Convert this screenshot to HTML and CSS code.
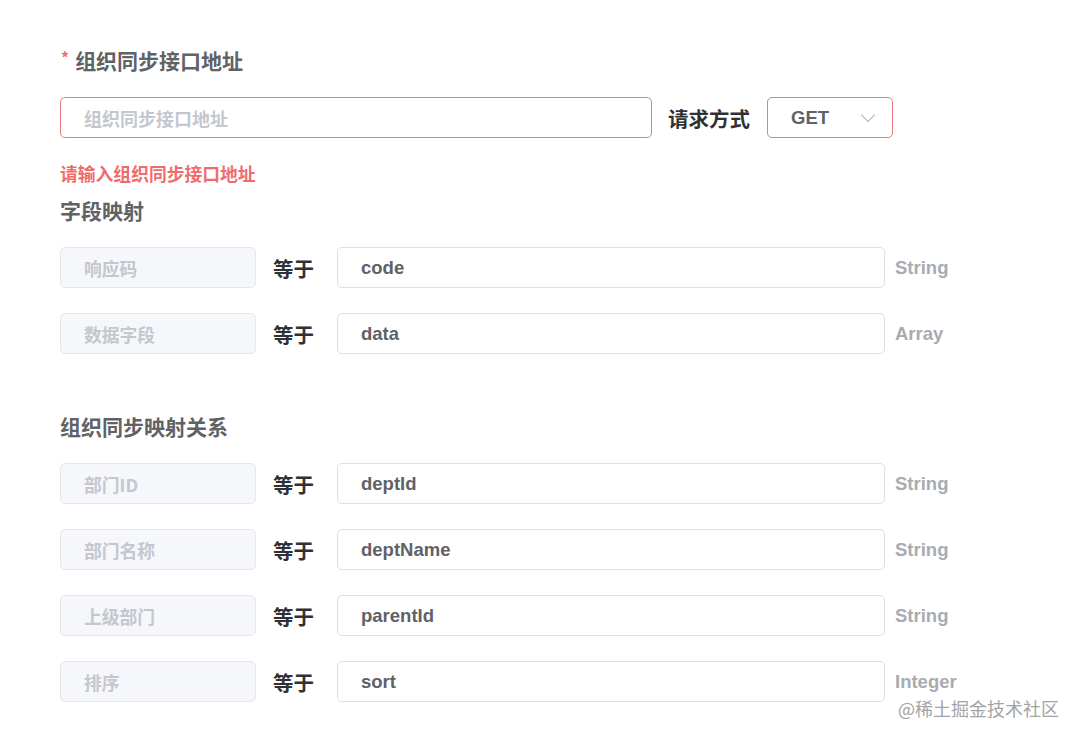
FILE: index.html
```html
<!DOCTYPE html>
<html lang="zh-CN">
<head>
<meta charset="utf-8">
<title>组织同步</title>
<link rel="stylesheet" href="styles.css">
</head>
<body>
<div class="form">
  <div class="title first"><span class="req">*</span>组织同步接口地址</div>
  <div class="url-row">
    <div class="input url is-error"><span class="placeholder">组织同步接口地址</span></div>
    <div class="label">请求方式</div>
    <div class="input select is-error">
      <span class="val">GET</span>
      <svg class="chev" width="16" height="10" viewBox="0 0 16 10"><path d="M1 1.5 L8 8.5 L15 1.5" fill="none" stroke="#c0c4cc" stroke-width="1.3"/></svg>
    </div>
  </div>
  <div class="error">请输入组织同步接口地址</div>

  <div class="title">字段映射</div>
  <div class="rows">
    <div class="row"><div class="key">响应码</div><div class="eq">等于</div><div class="input field"><span class="val">code</span></div><div class="type">String</div></div>
    <div class="row"><div class="key">数据字段</div><div class="eq">等于</div><div class="input field"><span class="val">data</span></div><div class="type">Array</div></div>
  </div>

  <div class="title second">组织同步映射关系</div>
  <div class="rows">
    <div class="row"><div class="key">部门ID</div><div class="eq">等于</div><div class="input field"><span class="val">deptId</span></div><div class="type">String</div></div>
    <div class="row"><div class="key">部门名称</div><div class="eq">等于</div><div class="input field"><span class="val">deptName</span></div><div class="type">String</div></div>
    <div class="row"><div class="key">上级部门</div><div class="eq">等于</div><div class="input field"><span class="val">parentId</span></div><div class="type">String</div></div>
    <div class="row"><div class="key">排序</div><div class="eq">等于</div><div class="input field"><span class="val">sort</span></div><div class="type">Integer</div></div>
  </div>
</div>
<div class="watermark">@稀土掘金技术社区</div>
</body>
</html>
```

FILE: styles.css
```css
* { box-sizing: border-box; }
html, body { margin: 0; padding: 0; background: #fff; }
body {
  width: 1081px;
  height: 741px;
  overflow: hidden;
  position: relative;
  font-family: "Liberation Sans", "Noto Sans CJK SC", sans-serif;
}
.form {
  padding: 45px 0 0 60px;
}
.title {
  font-family: "Noto Sans CJK SC", sans-serif;
  font-size: 21px;
  font-weight: 700;
  color: #606266;
  line-height: 30px;
  height: 30px;
  margin-bottom: 22px;
  display: flex;
  align-items: center;
}
.title.second { margin-top: 57px; margin-bottom: 22px; }
.req {
  color: #f56c6c;
  font-size: 16px;
  margin-right: 6px;
  margin-left: 1px;
  position: relative;
  top: -3px;
}
.url-row {
  display: flex;
  align-items: center;
  height: 41px;
}
.input {
  height: 41px;
  border: 1px solid #dcdfe6;
  border-radius: 5px;
  background: #fff;
  display: flex;
  align-items: center;
  padding-left: 23px;
  font-size: 18px;
}
.input.is-error { border-color: #ec7a7a; }
.url { width: 592px; }
.placeholder {
  font-family: "Noto Sans CJK SC", sans-serif;
  color: #c4c7ce;
  font-weight: 700;
}
.label, .eq {
  font-family: "Noto Sans CJK SC", sans-serif;
  font-size: 20.5px;
  font-weight: 700;
  color: #303133;
}
.label { margin-left: 16px; margin-right: 17px; }
.select {
  width: 126px;
  justify-content: space-between;
  padding-right: 16px;
}
.val {
  color: #606266;
  font-weight: 700;
  font-size: 18.5px;
}
.chev { margin-top: 1px; }
.error {
  margin-top: 23px;
  font-family: "Noto Sans CJK SC", sans-serif;
  font-size: 17.8px;
  font-weight: 700;
  color: #f06c6c;
  line-height: 24px;
  height: 24px;
  margin-bottom: 10px;
}
.rows {
  display: flex;
  flex-direction: column;
  gap: 25px;
}
.row {
  display: flex;
  align-items: center;
  height: 41px;
}
.key {
  width: 196px;
  height: 41px;
  background: #f5f7fa;
  border: 1px solid #e4e7ed;
  border-radius: 5px;
  display: flex;
  align-items: center;
  padding-left: 23px;
  font-family: "Noto Sans CJK SC", sans-serif;
  font-size: 17.8px;
  font-weight: 700;
  color: #c4c7ce;
}
.eq { margin-left: 17px; width: 64px; }
.field { width: 548px; }
.type {
  margin-left: 10px;
  font-size: 18.5px;
  font-weight: 700;
  color: #a8abb2;
}
.watermark {
  position: absolute;
  left: 898px;
  top: 696px;
  font-family: "Noto Sans CJK SC", sans-serif;
  font-size: 18px;
  color: #a3a3a3;
  line-height: 24px;
  white-space: nowrap;
}
```
